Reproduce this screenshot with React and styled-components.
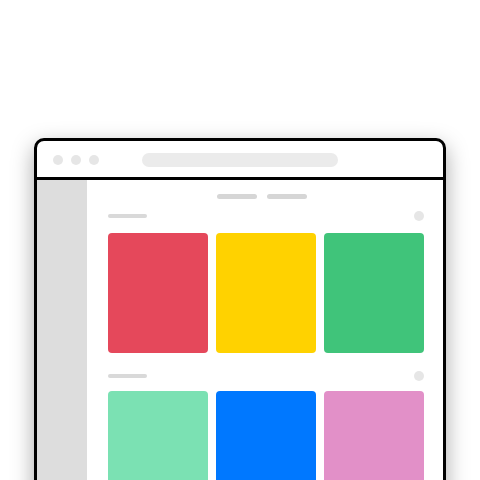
import React from "react";
import styled, { createGlobalStyle } from "styled-components";

const GlobalStyle = createGlobalStyle`
  html, body {
    margin: 0;
    padding: 0;
    height: 100%;
    overflow: hidden;
    background: #ffffff;
    font-family: "Liberation Sans", Arial, sans-serif;
  }
`;

const Stage = styled.div`
  display: flex;
  justify-content: center;
  padding-top: 138px;
`;

const BrowserWindow = styled.div`
  width: 412px;
  height: 420px;
  box-sizing: border-box;
  border: 3px solid #000;
  border-radius: 10px;
  background: #fff;
  box-shadow: 0 8px 22px rgba(0, 0, 0, 0.35);
  display: flex;
  flex-direction: column;
  overflow: hidden;
`;

const TitleBar = styled.div`
  height: 39px;
  box-sizing: border-box;
  flex-shrink: 0;
  border-bottom: 3px solid #000;
  display: grid;
  grid-template-columns: 1fr auto 1fr;
  align-items: center;
  padding: 2px 16px 0;
`;

const Dots = styled.div`
  display: flex;
  gap: 8px;
`;

const Dot = styled.span`
  width: 10px;
  height: 10px;
  border-radius: 50%;
  background: #e6e6e6;
`;

const AddressBar = styled.div`
  width: 196px;
  height: 14px;
  border-radius: 7px;
  background: #ebebeb;
`;

const Body = styled.div`
  flex: 1;
  display: flex;
`;

const Sidebar = styled.div`
  width: 50px;
  flex-shrink: 0;
  background: #dddddd;
`;

const Content = styled.div`
  flex: 1;
  padding: 14px 19px 0 21px;
  display: flex;
  flex-direction: column;
`;

const Tabs = styled.div`
  display: flex;
  justify-content: center;
  gap: 10px;
  padding-right: 8px;
  margin-bottom: 12px;
`;

const Tab = styled.span`
  width: 40px;
  height: 5px;
  border-radius: 3px;
  background: #d6d6d6;
`;

const Section = styled.section`
  display: flex;
  flex-direction: column;
  gap: ${(p) => p.$gap}px;
  margin-bottom: 18px;
`;

const SectionHeader = styled.div`
  height: 10px;
  display: flex;
  align-items: center;
  justify-content: space-between;
`;

const HeaderLine = styled.span`
  width: 39px;
  height: 4px;
  border-radius: 2px;
  background: #d9d9d9;
`;

const HeaderDot = styled.span`
  width: 10px;
  height: 10px;
  border-radius: 50%;
  background: #e6e6e6;
`;

const CardGrid = styled.div`
  display: grid;
  grid-template-columns: repeat(3, 100px);
  gap: 8px;
`;

const Card = styled.div`
  height: 120px;
  border-radius: 4px;
  background: ${(p) => p.$color};
`;

const sections = [
  { gap: 12, colors: ["#e5485b", "#ffd200", "#40c47a"] },
  { gap: 10, colors: ["#7be1b3", "#0078ff", "#e290c8"] },
];

export default function App() {
  return (
    <>
      <GlobalStyle />
      <Stage>
        <BrowserWindow>
          <TitleBar>
            <Dots>
              <Dot />
              <Dot />
              <Dot />
            </Dots>
            <AddressBar />
            <span />
          </TitleBar>
          <Body>
            <Sidebar />
            <Content>
              <Tabs>
                <Tab />
                <Tab />
              </Tabs>
              {sections.map((s, i) => (
                <Section key={i} $gap={s.gap}>
                  <SectionHeader>
                    <HeaderLine />
                    <HeaderDot />
                  </SectionHeader>
                  <CardGrid>
                    {s.colors.map((c) => (
                      <Card key={c} $color={c} />
                    ))}
                  </CardGrid>
                </Section>
              ))}
            </Content>
          </Body>
        </BrowserWindow>
      </Stage>
    </>
  );
}
